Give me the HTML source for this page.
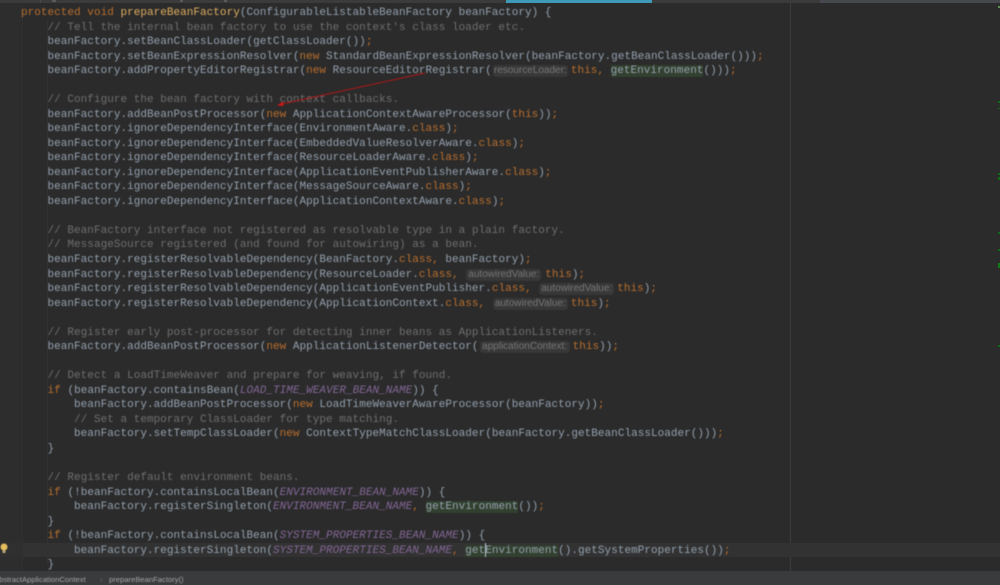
<!DOCTYPE html>
<html><head><meta charset="utf-8"><style>
html,body{margin:0;padding:0;width:1000px;height:585px;overflow:hidden;background:#2b2b2b}
#w{position:relative;width:1000px;height:585px;overflow:hidden;background:#2b2b2b}
#c{position:absolute;left:0;top:0;width:1000px;height:585px;filter:blur(.4px)}
.l{position:absolute;left:21px;margin-top:1px;white-space:pre;font:11px/14px "Liberation Mono",monospace;letter-spacing:.03px;color:#94a1af;height:14px}
.k{color:#b96f2e}.m{color:#e0ae60}.g{color:#6f6f6f}.p{color:#836796;font-style:italic}
.u{background:#32402f}
.h{display:inline-block;box-sizing:border-box;height:12px;margin-top:1px;background:#383838;color:#767676;border-radius:3px;font:10px/12px "Liberation Sans",sans-serif;letter-spacing:0;text-align:center;vertical-align:top;overflow:hidden;white-space:nowrap}
.a{position:absolute}
</style></head><body><div id="w">
<div class="a" style="left:0;top:0;width:1000px;height:3px;background:#3b3b3b"></div>
<div class="a" style="left:820px;top:0;width:180px;height:3px;background:#45494d"></div>
<div class="a" style="left:40px;top:0;width:1px;height:3px;background:#4a4a4a"></div>
<div class="a" style="left:52px;top:0;width:4px;height:2px;background:#5a5a5a"></div>
<div class="a" style="left:180px;top:0;width:3px;height:2px;background:#5a5a5a"></div>
<div class="a" style="left:224px;top:0;width:3px;height:2px;background:#5a5a5a"></div>
<div class="a" style="left:506px;top:0;width:146px;height:3px;background:#3f9ab8"></div>
<div class="a" style="left:0;top:3px;width:22px;height:568px;background:#2d2d2d"></div>
<div class="a" style="left:22px;top:3px;width:1px;height:568px;background:#313131"></div>
<div class="a" style="left:790px;top:3px;width:1px;height:568px;background:#3c3c3c"></div>
<div class="a" style="left:23px;top:543px;width:977px;height:14px;background:#323232"></div>
<div class="a" style="left:0;top:543px;width:23px;height:14px;background:#2f2f2f"></div>
<div class="a" style="left:47px;top:20px;width:1px;height:545px;background:#313131"></div>
<div class="a" style="left:0;top:571px;width:1000px;height:14px;background:#393b3d"></div>
<div class="a" style="left:998px;top:6px;width:2px;height:2px;background:#5f8f50"></div>
<div class="a" style="left:998px;top:101px;width:2px;height:2px;background:#0f6a16"></div>
<div class="a" style="left:998px;top:108px;width:2px;height:1px;background:#0f6a16"></div>
<div class="a" style="left:998px;top:173px;width:2px;height:2px;background:#0f6a16"></div>
<div class="a" style="left:998px;top:177px;width:2px;height:3px;background:#0f6a16"></div>
<div class="a" style="left:998px;top:232px;width:2px;height:2px;background:#0f6a16"></div>
<div class="a" style="left:998px;top:249px;width:2px;height:2px;background:#0f6a16"></div>
<div class="a" style="left:998px;top:263px;width:2px;height:5px;background:#0f7a16"></div>
<div class="a" style="left:998px;top:345px;width:2px;height:2px;background:#0f6a16"></div>
<div id="c">
<div class="l" style="top:5px"><span class="k">protected void </span><span class="m">prepareBeanFactory</span>(ConfigurableListableBeanFactory beanFactory) {</div>
<div class="l g" style="top:19.5px;color:#6f6f6f">    // Tell the internal bean factory to use the context's class loader etc.</div>
<div class="l" style="top:34px">    beanFactory.setBeanClassLoader(getClassLoader())<span class="k">;</span></div>
<div class="l" style="top:48.500px">    beanFactory.setBeanExpressionResolver(<span class="k">new </span>StandardBeanExpressionResolver(beanFactory.getBeanClassLoader()))<span class="k">;</span></div>
<div class="l" style="top:63px">    beanFactory.addPropertyEditorRegistrar(<span class="k">new </span>ResourceEditorRegistrar(<span class="h" style="width:75px;margin-left:1px;margin-right:3px">resourceLoader:</span><span class="k">this, </span><span class="u">getEnvironment</span>()))<span class="k">;</span></div>
<div class="l g" style="top:92px;color:#6f6f6f">    // Configure the bean factory with context callbacks.</div>
<div class="l" style="top:106.600px">    beanFactory.addBeanPostProcessor(<span class="k">new </span>ApplicationContextAwareProcessor(<span class="k">this</span>))<span class="k">;</span></div>
<div class="l" style="top:121.100px">    beanFactory.ignoreDependencyInterface(EnvironmentAware.<span class="k">class</span>)<span class="k">;</span></div>
<div class="l" style="top:135.700px">    beanFactory.ignoreDependencyInterface(EmbeddedValueResolverAware.<span class="k">class</span>)<span class="k">;</span></div>
<div class="l" style="top:150.200px">    beanFactory.ignoreDependencyInterface(ResourceLoaderAware.<span class="k">class</span>)<span class="k">;</span></div>
<div class="l" style="top:164.700px">    beanFactory.ignoreDependencyInterface(ApplicationEventPublisherAware.<span class="k">class</span>)<span class="k">;</span></div>
<div class="l" style="top:179.300px">    beanFactory.ignoreDependencyInterface(MessageSourceAware.<span class="k">class</span>)<span class="k">;</span></div>
<div class="l" style="top:193.800px">    beanFactory.ignoreDependencyInterface(ApplicationContextAware.<span class="k">class</span>)<span class="k">;</span></div>
<div class="l g" style="top:222.900px;color:#6f6f6f">    // BeanFactory interface not registered as resolvable type in a plain factory.</div>
<div class="l g" style="top:237.400px;color:#6f6f6f">    // MessageSource registered (and found for autowiring) as a bean.</div>
<div class="l" style="top:252px">    beanFactory.registerResolvableDependency(BeanFactory.<span class="k">class, </span>beanFactory)<span class="k">;</span></div>
<div class="l" style="top:266.500px">    beanFactory.registerResolvableDependency(ResourceLoader.<span class="k">class, </span><span class="h" style="width:75px;margin-left:1px;margin-right:4px">autowiredValue:</span><span class="k">this</span>)<span class="k">;</span></div>
<div class="l" style="top:281px">    beanFactory.registerResolvableDependency(ApplicationEventPublisher.<span class="k">class, </span><span class="h" style="width:75px;margin-left:1px;margin-right:3px">autowiredValue:</span><span class="k">this</span>)<span class="k">;</span></div>
<div class="l" style="top:295.600px">    beanFactory.registerResolvableDependency(ApplicationContext.<span class="k">class, </span><span class="h" style="width:75px;margin-left:1px;margin-right:3px">autowiredValue:</span><span class="k">this</span>)<span class="k">;</span></div>
<div class="l g" style="top:324.700px;color:#6f6f6f">    // Register early post-processor for detecting inner beans as ApplicationListeners.</div>
<div class="l" style="top:339.200px">    beanFactory.addBeanPostProcessor(<span class="k">new </span>ApplicationListenerDetector(<span class="h" style="width:90px;margin-left:1px;margin-right:3px">applicationContext:</span><span class="k">this</span>))<span class="k">;</span></div>
<div class="l g" style="top:368.300px;color:#6f6f6f">    // Detect a LoadTimeWeaver and prepare for weaving, if found.</div>
<div class="l" style="top:382.800px">    <span class="k">if </span>(beanFactory.containsBean(<span class="p">LOAD_TIME_WEAVER_BEAN_NAME</span>)) {</div>
<div class="l" style="top:397.400px">        beanFactory.addBeanPostProcessor(<span class="k">new </span>LoadTimeWeaverAwareProcessor(beanFactory))<span class="k">;</span></div>
<div class="l g" style="top:411.900px;color:#6f6f6f">        // Set a temporary ClassLoader for type matching.</div>
<div class="l" style="top:426.400px">        beanFactory.setTempClassLoader(<span class="k">new </span>ContextTypeMatchClassLoader(beanFactory.getBeanClassLoader()))<span class="k">;</span></div>
<div class="l" style="top:441px">    }</div>
<div class="l g" style="top:470.100px;color:#6f6f6f">    // Register default environment beans.</div>
<div class="l" style="top:484.600px">    <span class="k">if </span>(!beanFactory.containsLocalBean(<span class="p">ENVIRONMENT_BEAN_NAME</span>)) {</div>
<div class="l" style="top:499.100px">        beanFactory.registerSingleton(<span class="p">ENVIRONMENT_BEAN_NAME</span><span class="k">, </span><span class="u">getEnvironment</span>())<span class="k">;</span></div>
<div class="l" style="top:513.700px">    }</div>
<div class="l" style="top:528.200px">    <span class="k">if </span>(!beanFactory.containsLocalBean(<span class="p">SYSTEM_PROPERTIES_BEAN_NAME</span>)) {</div>
<div class="l" style="top:542.800px">        beanFactory.registerSingleton(<span class="p">SYSTEM_PROPERTIES_BEAN_NAME</span><span class="k">, </span><span class="u">getEnvironment</span>().getSystemProperties())<span class="k">;</span></div>
<div class="l" style="top:557.300px">    }</div>
<div class="a" style="left:485px;top:543px;width:1px;height:14px;background:#b8c4d0"></div>
<svg class="a" style="left:0;top:0" width="1000" height="585">
<line x1="425" y1="73" x2="282" y2="104" stroke="#b01818" stroke-width="1"/>
<path d="M277 105.500 L283 101.500 L283.500 106 Z" fill="#d01818"/>
<circle cx="4" cy="547" r="3.500" fill="#e5bd5c"/>
<rect x="2.500" y="550" width="3" height="3" fill="#b9a77a"/>
</svg>
<div class="a" style="left:-6px;top:573px;font:7.600px/13px 'Liberation Sans',sans-serif;letter-spacing:.02px;color:#a3a5a7;white-space:pre">AbstractApplicationContext</div>
<div class="a" style="left:100px;top:573px;font:8px/13px 'Liberation Sans',sans-serif;color:#66686a">›</div>
<div class="a" style="left:109px;top:573px;font:7.600px/13px 'Liberation Sans',sans-serif;letter-spacing:.02px;color:#a3a5a7;white-space:pre">prepareBeanFactory()</div>
</div>
</div></body></html>
